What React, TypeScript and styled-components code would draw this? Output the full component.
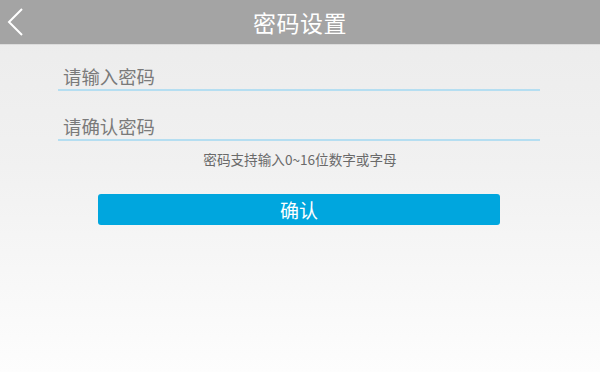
import React from "react";
import styled, { createGlobalStyle } from "styled-components";

const Global = createGlobalStyle`
  html, body { margin: 0; padding: 0; }
  body {
    width: 600px;
    height: 372px;
    overflow: hidden;
    font-family: "Noto Sans CJK SC", "Noto Sans", sans-serif;
    background: linear-gradient(to bottom, #ebebeb 0%, #f1f1f1 45%, #fdfdfd 100%);
  }
`;

const Page = styled.div`
  width: 600px;
  height: 372px;
  display: flex;
  flex-direction: column;
`;

const Header = styled.header`
  height: 44px;
  background: #a4a4a4;
  border-bottom: 1px solid #dcdcdc;
  display: flex;
  align-items: center;
  justify-content: center;
  position: relative;
`;

const BackButton = styled.button`
  position: absolute;
  left: 2px;
  top: 6px;
  width: 26px;
  height: 32px;
  padding: 0;
  border: none;
  background: none;
  display: flex;
  align-items: center;
  justify-content: center;
`;

const Title = styled.h1`
  margin: 0;
  color: #ffffff;
  font-size: 23px;
  font-weight: 400;
  line-height: 44px;
  letter-spacing: 0.5px;
`;

const Form = styled.div`
  display: flex;
  flex-direction: column;
  padding: 0 60px 0 58px;
`;

const Field = styled.div<{ $top: number }>`
  margin-top: ${(p) => p.$top}px;
  height: 28px;
  border-bottom: 2px solid #b5def1;
  display: flex;
  align-items: flex-end;
  padding-left: 5px;
  color: #7a7a7a;
  font-size: 18.4px;
  line-height: 26px;
`;

const Hint = styled.p`
  margin: 10px 0 0;
  text-align: center;
  color: #6a6a6a;
  font-size: 13.6px;
  line-height: 16px;
  padding-left: 2px;
`;

const ConfirmButton = styled.button`
  margin: 27px 0 0 40px;
  width: 402px;
  height: 31px;
  border: none;
  border-radius: 3px;
  background: #00a6de;
  color: #ffffff;
  font-family: "Noto Sans CJK SC", "Noto Sans", sans-serif;
  font-size: 19px;
  line-height: 31px;
  padding: 0;
`;

export default function App() {
  return (
    <Page>
      <Global />
      <Header>
        <BackButton aria-label="返回">
          <svg width="20" height="30" viewBox="0 0 20 30">
            <path d="M17 2 L4 15 L17 28" fill="none" stroke="#ffffff" strokeWidth="2" />
          </svg>
        </BackButton>
        <Title>密码设置</Title>
      </Header>
      <Form>
        <Field $top={16}>请输入密码</Field>
        <Field $top={20}>请确认密码</Field>
        <Hint>密码支持输入0~16位数字或字母</Hint>
        <ConfirmButton>确认</ConfirmButton>
      </Form>
    </Page>
  );
}
